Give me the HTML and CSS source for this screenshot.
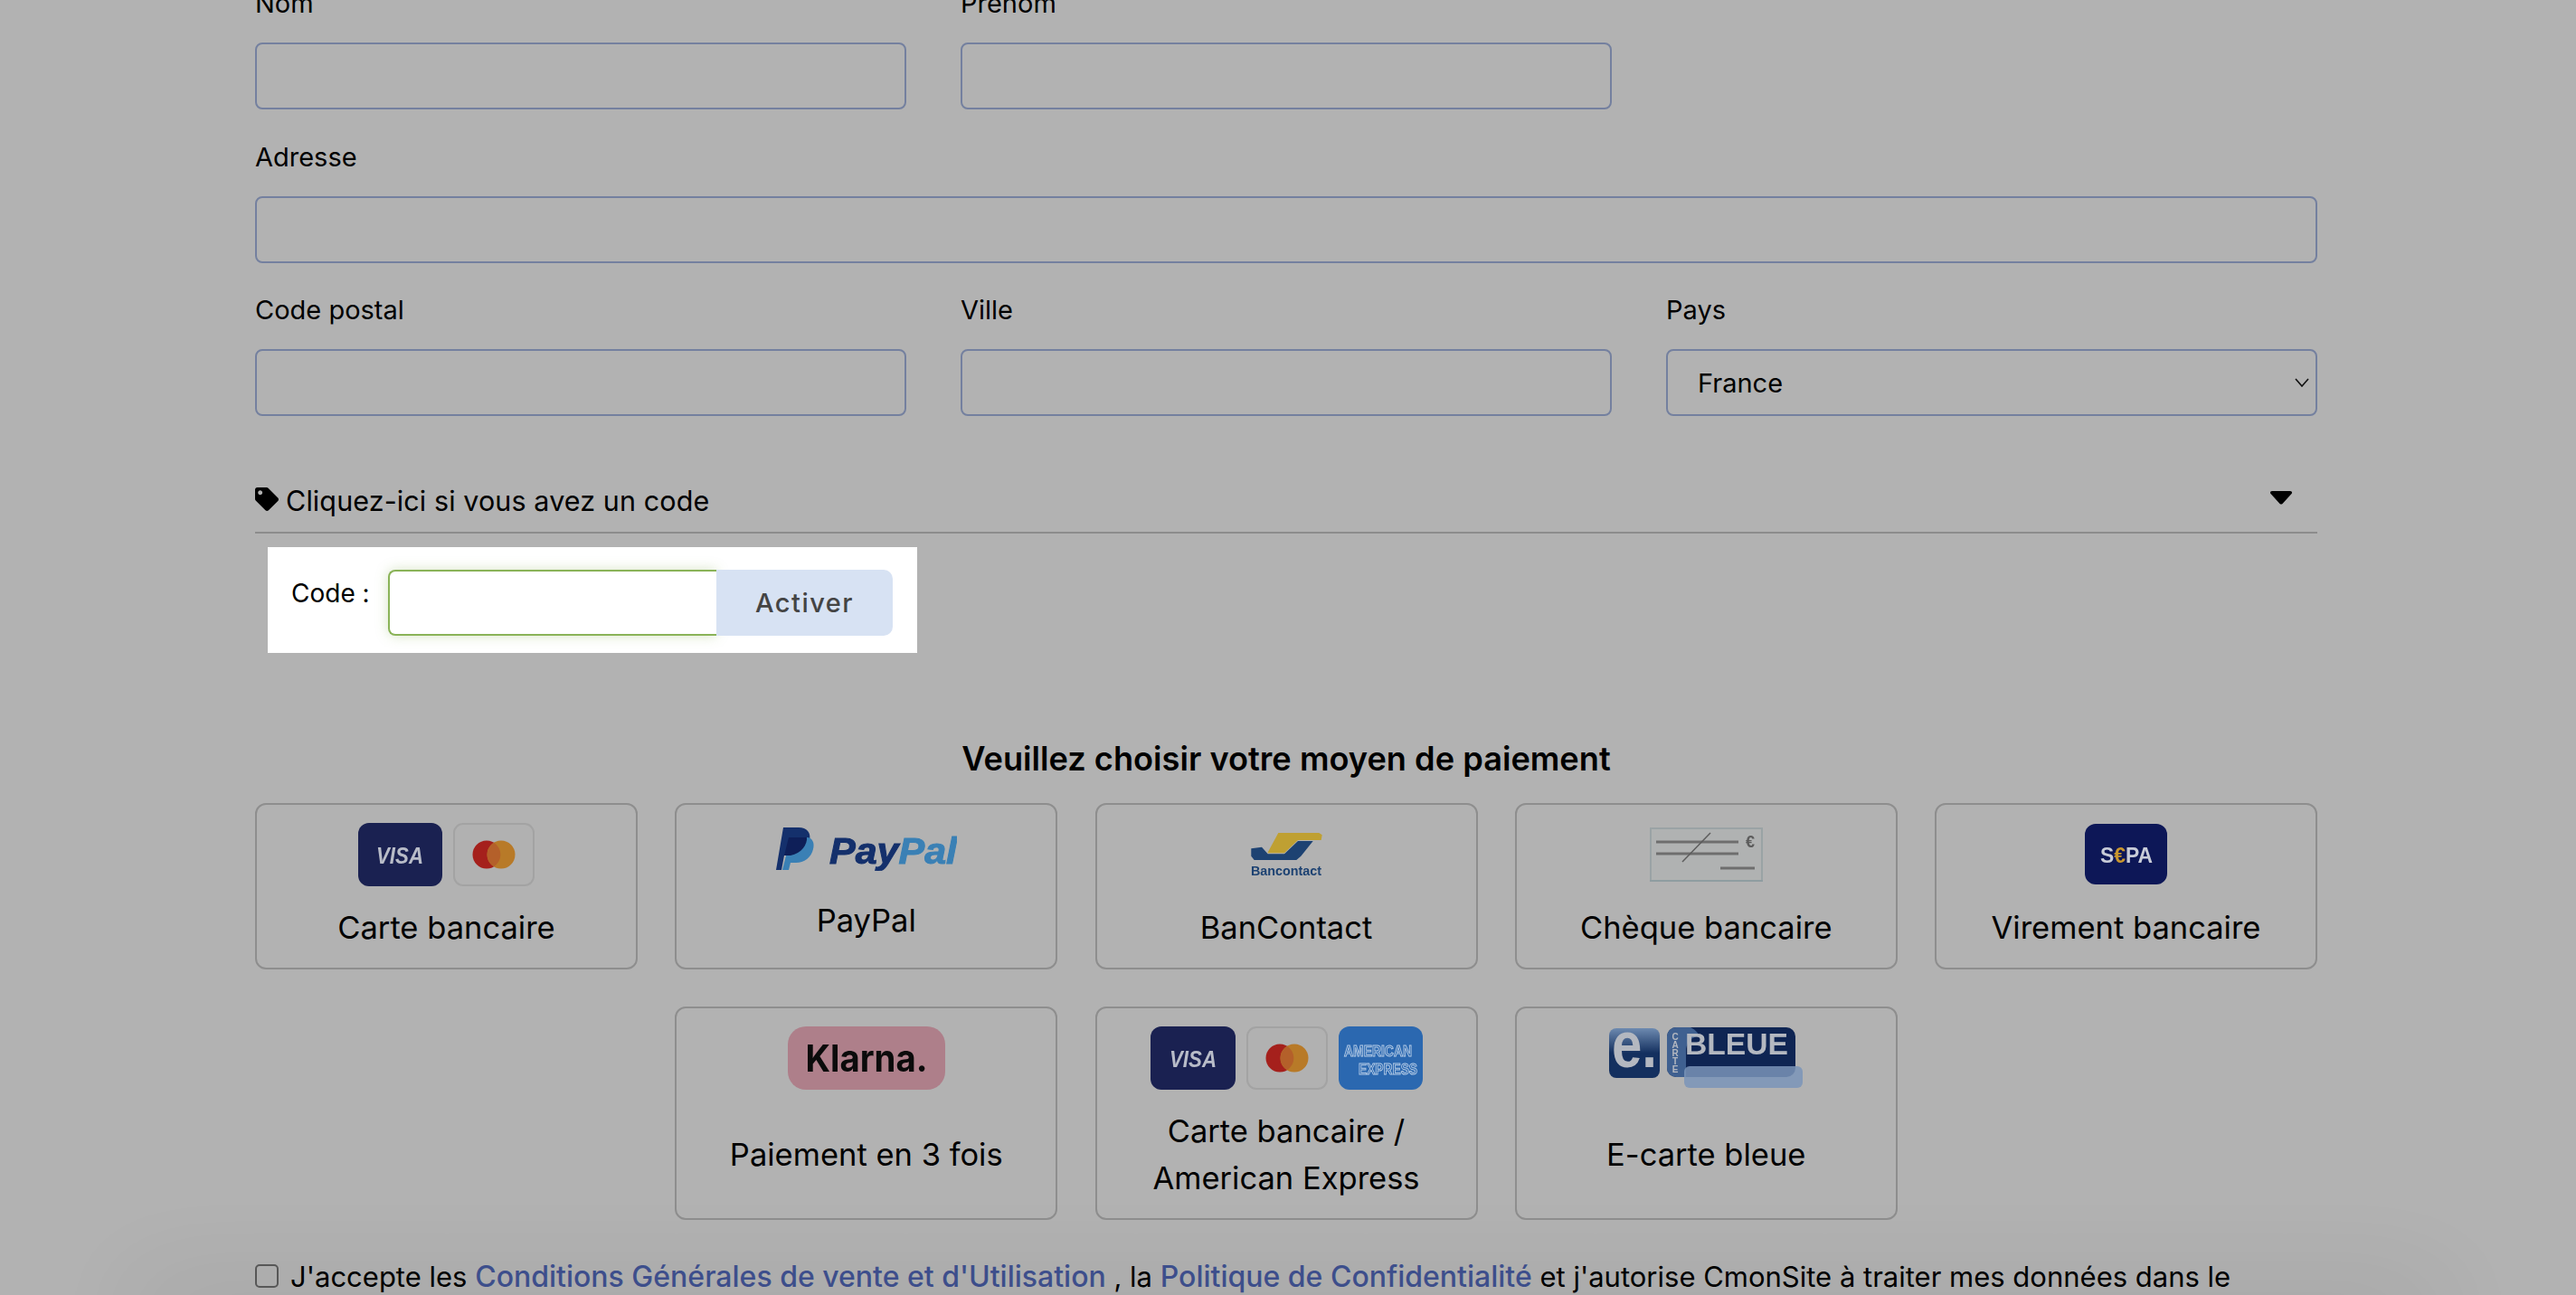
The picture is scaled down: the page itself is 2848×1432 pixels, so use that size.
FILE: index.html
```html
<!DOCTYPE html>
<html lang="fr">
<head>
    <meta charset="UTF-8">
    <title>Paiement</title>
    <link rel="stylesheet" href="styles.css">
</head>
<body>
    <div class="page">
        <form class="address">
            <div class="row">
                <div class="field"><label>Nom</label><input type="text"></div>
                <div class="field"><label>Prénom</label><input type="text"></div>
            </div>
            <div class="field"><label>Adresse</label><input type="text"></div>
            <div class="row">
                <div class="field"><label>Code postal</label><input type="text"></div>
                <div class="field"><label>Ville</label><input type="text"></div>
                <div class="field">
                    <label>Pays</label>
                    <div class="select-wrap">
                        <select><option>France</option></select>
                        <svg class="chevron" viewBox="0 0 16 10"><path d="M1 1l7 8 7-8" fill="none" stroke="#111" stroke-width="1.6"/></svg>
                    </div>
                </div>
            </div>
        </form>

        <div class="code-toggle">
            <span class="code-title">
                <svg class="tag" viewBox="0 0 512 512"><path d="M0 252.118V48C0 21.49 21.49 0 48 0h204.118a48 48 0 0 1 33.941 14.059l211.882 211.882c18.745 18.745 18.745 49.137 0 67.882L293.823 497.941c-18.745 18.745-49.137 18.745-67.882 0L14.059 286.059A48 48 0 0 1 0 252.118zM112 64c-26.51 0-48 21.49-48 48s21.49 48 48 48 48-21.49 48-48-21.49-48-48-48z"/></svg>
                Cliquez-ici si vous avez un code
            </span>
            <svg class="caret" viewBox="0 0 24 15"><path d="M2 0h20c2 0 2.500 2 1.500 3L13.500 14c-.8.800-2.200.800-3 0L.5 3C-.5 2 0 0 2 0z"/></svg>
        </div>

        <div class="code-box">
            <label class="code-label">Code :</label>
            <input class="code-input" type="text">
            <button class="code-btn" type="button">Activer</button>
        </div>

        <h2 class="pay-title">Veuillez choisir votre moyen de paiement</h2>

        <div class="pay-grid">
            <div class="card">
                <div class="logos">
                    <svg class="logo" width="93" height="70"><rect width="93" height="70" rx="12" fill="#1a2151"/><text x="46" y="45" text-anchor="middle" class="t-visa" textLength="52" lengthAdjust="spacingAndGlyphs">VISA</text></svg>
                    <svg class="logo" width="90" height="70"><rect x="1" y="1" width="88" height="68" rx="10" fill="#b1b1b1" stroke="#a3a3a3" stroke-width="2"/><circle cx="37" cy="35" r="15.500" fill="#a5201c"/><circle cx="53" cy="35" r="15.500" fill="#b87a28"/><path d="M45 21.800a15.500 15.500 0 0 1 0 26.400a15.500 15.500 0 0 1 0-26.400z" fill="#b4602a"/></svg>
                </div>
                <div class="card-label">Carte bancaire</div>
            </div>
            <div class="card card-paypal">
                <div class="logos">
                    <svg class="logo paypal" width="200" height="49">
                        <path d="M8 1h17c9 0 14 6 12 14-2 11-10 17-21 17h-7l-3 16H0z" fill="#14306c"/>
                        <path d="M16 12h18c6 0 9 6 7 13-2 9-10 15-19 15h-6l-2 8H7z" fill="#3a80b5"/>
                        <path d="M14 12h20c1 7-6 18-18 20H9z" fill="#0e1f58"/>
                        <text x="59" y="41" class="t-paypal" textLength="141" lengthAdjust="spacingAndGlyphs"><tspan fill="#14306c" stroke="#14306c">Pay</tspan><tspan fill="#3a80b5" stroke="#3a80b5">Pal</tspan></text>
                    </svg>
                </div>
                <div class="card-label">PayPal</div>
            </div>
            <div class="card">
                <div class="logos">
                    <svg class="logo" width="80" height="49">
                        <path d="M1.300 18.300L13 16.700l6.700 7.600H38L53 10h16.700L56.300 26.700 51.300 31H4.700l-3.400-4.300z" fill="#1d4272"/>
                        <path d="M19.300 23.300H38L53 9h25.700l1-5.700L76.300 1h-45z" fill="#bfa032"/>
                        <text x="40" y="48" text-anchor="middle" class="t-banc" textLength="78" lengthAdjust="spacingAndGlyphs">Bancontact</text>
                    </svg>
                </div>
                <div class="card-label">BanContact</div>
            </div>
            <div class="card">
                <div class="logos">
                    <svg class="logo" width="125" height="60">
                        <rect x="1" y="1" width="123" height="58" fill="#b0b2b2" stroke="#9aa3a5" stroke-width="2"/>
                        <path d="M0 59h125" stroke="#8f9da1" stroke-width="2"/>
                        <path d="M7 16h91M7 29h91M78 45h38" stroke="#6e6e6e" stroke-width="3"/>
                        <path d="M67 6L36 38" stroke="#5c5c5c" stroke-width="1.500"/>
                        <text x="111" y="22" text-anchor="middle" class="t-euro">€</text>
                    </svg>
                </div>
                <div class="card-label">Chèque bancaire</div>
            </div>
            <div class="card">
                <div class="logos">
                    <svg class="logo" width="91" height="67"><rect width="91" height="67" rx="12" fill="#0d1757"/><text x="46" y="43" text-anchor="middle" class="t-sepa" textLength="58" lengthAdjust="spacingAndGlyphs">S<tspan fill="#c9962e">€</tspan>PA</text></svg>
                </div>
                <div class="card-label">Virement bancaire</div>
            </div>

            <div class="card card-second">
                <div class="logos">
                    <svg class="logo" width="174" height="70"><rect width="174" height="70" rx="20" fill="#ae7f8a"/><text x="87" y="50" text-anchor="middle" class="t-klarna" textLength="135" lengthAdjust="spacingAndGlyphs">Klarna.</text></svg>
                </div>
                <div class="card-label">Paiement en 3 fois</div>
            </div>
            <div class="card">
                <div class="logos">
                    <svg class="logo" width="94" height="70"><rect width="94" height="70" rx="12" fill="#1a2151"/><text x="47" y="45" text-anchor="middle" class="t-visa" textLength="52" lengthAdjust="spacingAndGlyphs">VISA</text></svg>
                    <svg class="logo" width="90" height="70"><rect x="1" y="1" width="88" height="68" rx="10" fill="#b1b1b1" stroke="#a3a3a3" stroke-width="2"/><circle cx="37" cy="35" r="15.500" fill="#a5201c"/><circle cx="53" cy="35" r="15.500" fill="#b87a28"/><path d="M45 21.800a15.500 15.500 0 0 1 0 26.400a15.500 15.500 0 0 1 0-26.400z" fill="#b4602a"/></svg>
                    <svg class="logo" width="93" height="70"><rect width="93" height="70" rx="12" fill="#2b68b0"/><text x="6" y="33" class="t-amex" textLength="75" lengthAdjust="spacingAndGlyphs">AMERICAN</text><text x="22" y="53" class="t-amex" textLength="65" lengthAdjust="spacingAndGlyphs">EXPRESS</text></svg>
                </div>
                <div class="card-label">Carte bancaire /<br>American Express</div>
            </div>
            <div class="card">
                <div class="logos">
                    <svg class="logo" width="214" height="69">
                        <defs>
                            <linearGradient id="eBox" x1="0" y1="0" x2="0" y2="1"><stop offset="0" stop-color="#6d8ab0"/><stop offset=".5" stop-color="#14305f"/></linearGradient>
                        </defs>
                        <rect y="2" width="56" height="55" rx="8" fill="url(#eBox)"/>
                        <text x="3" y="45" class="t-ecarte" textLength="50" lengthAdjust="spacingAndGlyphs">e.</text>
                        <rect x="64" y="1" width="142" height="55" rx="10" fill="#0f2553"/>
                        <path d="M74 1h16c6 3 8 6 10 10-9 0-14 7-15 14v31H74a10 10 0 0 1-10-10V11A10 10 0 0 1 74 1z" fill="#3f6090"/>
                        <text class="t-carte"><tspan x="73" y="15">C</tspan><tspan x="73" y="24">A</tspan><tspan x="73" y="33">R</tspan><tspan x="73" y="42">T</tspan><tspan x="73" y="51">E</tspan></text>
                        <text x="84" y="31" class="t-bleue" textLength="114" lengthAdjust="spacingAndGlyphs">BLEUE</text>
                        <rect x="83" y="44" width="131" height="24" rx="6" fill="#7a94b8" opacity=".85"/>
                    </svg>
                </div>
                <div class="card-label">E-carte bleue</div>
            </div>
        </div>

        <div class="terms">
            <input class="terms-check" type="checkbox">
            <span>J'accepte les <a href="#">Conditions Générales de vente et d'Utilisation</a> , la <a href="#">Politique de Confidentialité</a> et j'autorise CmonSite à traiter mes données dans le</span>
        </div>
    </div>
    <div class="bottom-shade"></div>
</body>
</html>
```

FILE: styles.css
```css
* {
    box-sizing: border-box;
}
html, body {
    margin: 0;
    height: 1432px;
    overflow: hidden;
}
body {
    background-color: #b2b2b2;
    color: #000;
    font-family: Inter, "Noto Sans", sans-serif;
    font-size: 29px;
}
.page {
    width: 2280px;
    margin: -17px 0 0 282px;
}

/* address form */
.row {
    display: grid;
    grid-template-columns: repeat(3, 720px);
    column-gap: 60px;
}
.field {
    margin-bottom: 31.5px;
}
.field label {
    display: block;
    line-height: 42px;
    margin-bottom: 22px;
}
.field input,
.field select {
    display: block;
    width: 100%;
    height: 74px;
    background: transparent;
    border: 2px solid #74809f;
    border-radius: 8px;
    font: inherit;
}
.select-wrap {
    position: relative;
}
.field select {
    appearance: none;
    padding-left: 33px;
    color: #000;
}
.chevron {
    position: absolute;
    right: 9px;
    top: 32px;
    width: 16px;
    height: 10px;
}

/* code */
.code-toggle {
    display: flex;
    justify-content: space-between;
    align-items: flex-start;
    margin-top: 38px;
    padding: 0 28px 10px 0;
    border-bottom: 2px solid #8c8c8c;
}
.code-title {
    display: flex;
    align-items: center;
    gap: 8px;
    font-size: 30.5px;
    letter-spacing: .1px;
    line-height: 48px;
}
.tag {
    width: 26px;
    height: 26px;
    margin-top: -4px;
}
.caret {
    width: 24px;
    height: 15px;
    margin-top: 13px;
}
.code-box {
    display: flex;
    align-items: flex-start;
    width: 718px;
    margin: 15px 0 0 14px;
    padding: 25px 27px 19px 26px;
    background: #fff;
}
.code-label {
    width: 107px;
    font-size: 28px;
    line-height: 52px;
}
.code-input {
    width: 363px;
    height: 73px;
    background: #fff;
    border: 2px solid #8ab358;
    border-right: 0;
    border-radius: 8px 0 0 8px;
    box-shadow: 0 0 14px rgba(138, 179, 88, .35);
}
.code-btn {
    width: 195px;
    height: 73px;
    border: 0;
    border-radius: 0 10px 10px 0;
    background: #d7e2f3;
    color: #444;
    font: 500 29px Inter, sans-serif;
    letter-spacing: 1.5px;
}

/* payment */
.pay-title {
    margin: 92px 0 24px;
    font-size: 36.2px;
    font-weight: 600;
    line-height: 50px;
    text-align: center;
}
.pay-grid {
    display: grid;
    grid-template-columns: repeat(5, 423px);
    gap: 41px 41.25px;
}
.card {
    display: flex;
    flex-direction: column;
    padding: 20px 10px 18px;
    border: 2px solid #8e8e8e;
    border-radius: 12px;
    font-size: 34.5px;
    line-height: 52px;
    text-align: center;
}
.card-second {
    grid-column: 2;
}
.logos {
    display: flex;
    justify-content: center;
    align-items: center;
    gap: 12px;
    height: 70px;
}
.logo {
    filter: blur(.6px);
}
.card-label {
    flex: 1;
    display: flex;
    align-items: center;
    justify-content: center;
    margin-top: 20px;
}
.card-paypal .logos {
    align-items: flex-start;
}
.card-paypal .paypal {
    margin-top: 4px;
}
.card-paypal .card-label {
    margin-top: 12px;
    padding-bottom: 8px;
}

/* logo texts */
.t-visa {
    font: italic 700 26px "Liberation Sans", sans-serif;
    fill: #b8bcc8;
}
.t-paypal {
    font: italic 700 40px "Liberation Sans", sans-serif;
    stroke-width: 1;
}
.t-banc {
    font: 700 15px "Liberation Sans", sans-serif;
    fill: #1d4272;
}
.t-euro {
    font: 700 18px "Liberation Sans", sans-serif;
    fill: #5c5c5c;
}
.t-sepa {
    font: 700 24px "Liberation Sans", sans-serif;
    fill: #c8ccd8;
}
.t-klarna {
    font: 700 41px Inter, sans-serif;
    fill: #0b0b0b;
}
.t-amex {
    font: 700 17px "Liberation Sans", sans-serif;
    fill: #2b68b0;
    stroke: #b4cbe6;
    stroke-width: 1;
}
.t-ecarte {
    font: 700 72px "Liberation Sans", sans-serif;
    fill: #b4b8c0;
}
.t-carte {
    font: 700 10px "Liberation Sans", sans-serif;
    fill: #b4b8c0;
    text-anchor: middle;
}
.t-bleue {
    font: 700 33px "Liberation Sans", sans-serif;
    fill: #b4b8c0;
}

/* terms */
.terms {
    display: flex;
    gap: 13px;
    margin-top: 37px;
    line-height: 52px;
    font-size: 31px;
    white-space: nowrap;
}
.terms-check {
    appearance: none;
    flex: none;
    width: 26px;
    height: 26px;
    margin: 12px 0 0;
    border: 2px solid #5a5a5a;
    border-radius: 5px;
}
.terms a {
    color: #3f5190;
    font-size: 32px;
    font-weight: 500;
    text-decoration: none;
}
.bottom-shade {
    position: fixed;
    left: 160px;
    right: 160px;
    bottom: -40px;
    height: 40px;
    box-shadow: 0 0 110px 10px rgba(0, 0, 0, .09);
}
```
